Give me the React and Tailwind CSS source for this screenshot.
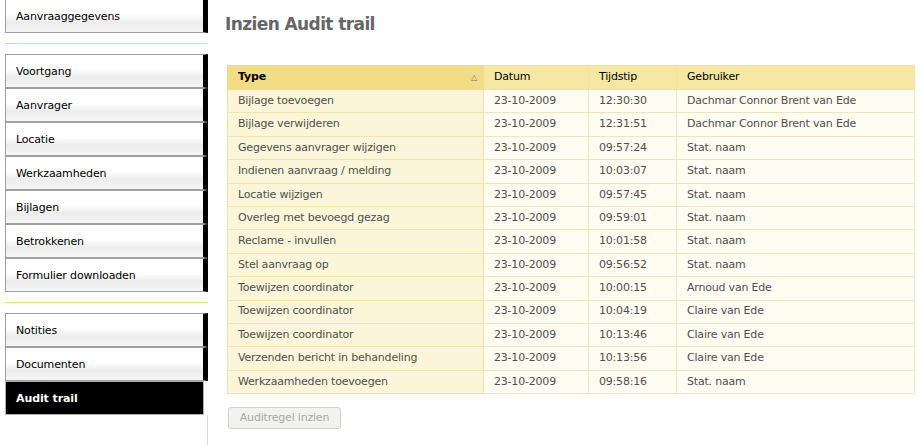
import React from 'react'

const font = { fontFamily: '"DejaVu Sans", Verdana, sans-serif' }

const navTop = ['Aanvraaggegevens']
const navMid = ['Voortgang', 'Aanvrager', 'Locatie', 'Werkzaamheden', 'Bijlagen', 'Betrokkenen', 'Formulier downloaden']
const navBottom = ['Notities', 'Documenten']

const rows = [
  ['Bijlage toevoegen', '23-10-2009', '12:30:30', 'Dachmar Connor Brent van Ede'],
  ['Bijlage verwijderen', '23-10-2009', '12:31:51', 'Dachmar Connor Brent van Ede'],
  ['Gegevens aanvrager wijzigen', '23-10-2009', '09:57:24', 'Stat. naam'],
  ['Indienen aanvraag / melding', '23-10-2009', '10:03:07', 'Stat. naam'],
  ['Locatie wijzigen', '23-10-2009', '09:57:45', 'Stat. naam'],
  ['Overleg met bevoegd gezag', '23-10-2009', '09:59:01', 'Stat. naam'],
  ['Reclame - invullen', '23-10-2009', '10:01:58', 'Stat. naam'],
  ['Stel aanvraag op', '23-10-2009', '09:56:52', 'Stat. naam'],
  ['Toewijzen coordinator', '23-10-2009', '10:00:15', 'Arnoud van Ede'],
  ['Toewijzen coordinator', '23-10-2009', '10:04:19', 'Claire van Ede'],
  ['Toewijzen coordinator', '23-10-2009', '10:13:46', 'Claire van Ede'],
  ['Verzenden bericht in behandeling', '23-10-2009', '10:13:56', 'Claire van Ede'],
  ['Werkzaamheden toevoegen', '23-10-2009', '09:58:16', 'Stat. naam'],
]

const NavButton = ({ label }) => (
  <div className="h-[34px] flex items-center pl-[10px] pt-[3px] border-t border-l border-b border-[#a0a0a0] border-r-[5px] border-r-black bg-[linear-gradient(to_bottom,#ffffff_0%,#ffffff_45%,#ececec_70%,#f6f6f6_100%)] text-[11px] text-black tracking-[-0.15px]">
    {label}
  </div>
)

const Separator = () => <div className="h-px my-[10px] bg-[#eedb7e]" />

const App = () => {
  return (
    <div className="w-[922px] h-[445px] bg-white flex overflow-hidden" style={font}>
      <div className="w-[203px] ml-[5px] shrink-0 flex flex-col -mt-px">
        {navTop.map((l) => <NavButton key={l} label={l} />)}
        <Separator />
        {navMid.map((l) => <NavButton key={l} label={l} />)}
        <Separator />
        {navBottom.map((l) => <NavButton key={l} label={l} />)}
        <div className="h-[34px] flex items-center pl-[10px] pt-[2px] border border-[#b0b0b0] bg-black text-white font-bold text-[11px] tracking-[-0.1px] mr-[4px]">
          Audit trail
        </div>
        <div className="flex-1 border-r border-[#d8d8d8]" />
      </div>

      <div className="flex-1 pl-[17px] pr-[7px]">
        <h1 className="mt-[14px] text-[17px] leading-[20px] font-bold text-[#666666] tracking-[-0.6px]">Inzien Audit trail</h1>

        <table className="mt-[31px] ml-[2px] w-[688px] border-collapse border border-[#eedd90] text-[11px] tracking-[-0.2px]">
          <thead>
            <tr className="h-[24px]">
              <th className="w-[256px] bg-[#f2dd86] border border-[#eedd90] text-left font-bold text-black pl-[10px] pr-[6px]">
                <div className="flex items-center justify-between">
                  <span>Type</span>
                  <span className="text-[8px] text-[#777] font-normal">△</span>
                </div>
              </th>
              <th className="w-[105px] bg-[#f6e8a3] border border-[#efe2a5] text-left font-normal text-black pl-[10px]">Datum</th>
              <th className="w-[88px] bg-[#f6e8a3] border border-[#efe2a5] text-left font-normal text-black pl-[10px]">Tijdstip</th>
              <th className="bg-[#f6e8a3] border border-[#efe2a5] text-left font-normal text-black pl-[10px]">Gebruiker</th>
            </tr>
          </thead>
          <tbody>
            {rows.map((r, i) => (
              <tr key={i} className="h-[23.4px] text-[#4f4f4f]">
                <td className="bg-[#fbf6d9] border border-[#f1e5a6] pl-[10px]">{r[0]}</td>
                <td className="bg-[#fffdf2] border border-[#efe6c0] pl-[10px]">{r[1]}</td>
                <td className="bg-[#fffdf2] border border-[#efe6c0] pl-[10px]">{r[2]}</td>
                <td className="bg-[#fffdf2] border border-[#efe6c0] pl-[10px]">{r[3]}</td>
              </tr>
            ))}
          </tbody>
        </table>

        <button className="mt-[13px] ml-[3px] h-[22px] w-[113px] border border-[#cfcfcf] rounded-[3px] bg-[#f2f2ee] text-[11px] text-[#a8a8a8] tracking-[-0.2px]">
          Auditregel inzien
        </button>
      </div>
    </div>
  )
}

export default App
